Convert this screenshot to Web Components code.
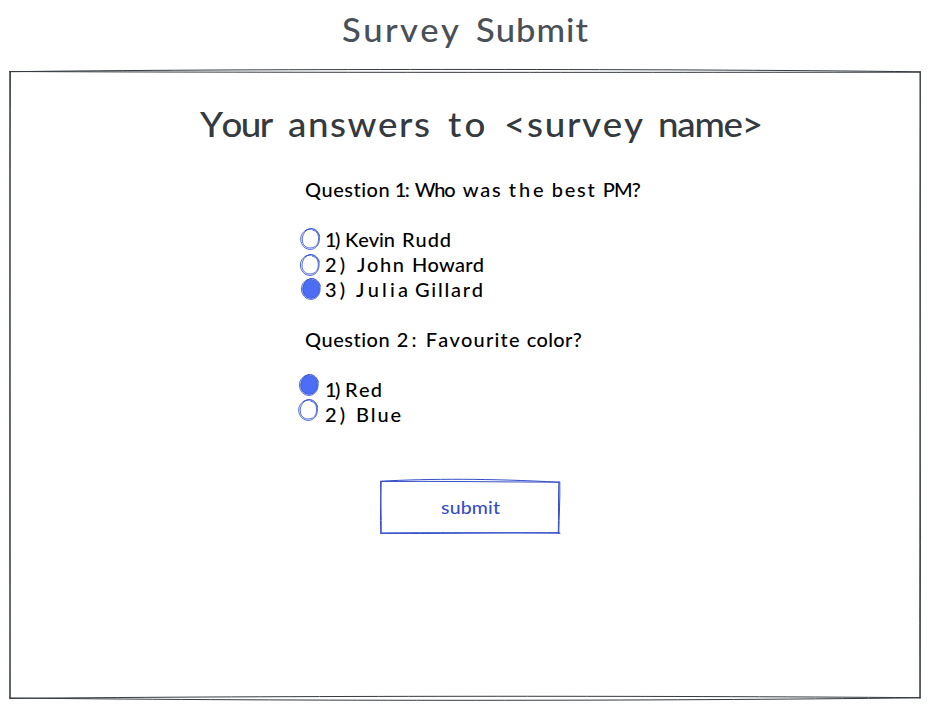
<!DOCTYPE html>
<html lang="en">
<head>
<meta charset="utf-8">
<title>Survey Submit</title>
<style>
html, body { margin: 0; background: #fff; }
body { width: 930px; height: 708px; overflow: hidden; font-family: "Lato", "Open Sans", sans-serif; }
</style>
</head>
<body>
<survey-page></survey-page>
<script>
const define = (name, html, ready) => customElements.define(name, class extends HTMLElement {
  connectedCallback() {
    if (this.shadowRoot) return;
    this.attachShadow({ mode: 'open' }).innerHTML = html;
    if (ready) ready(this);
  }
});

// A line of broad, loosely tracked lettering. "fit" lists the start and end of each word.
define('hand-text', `<style>
  :host { display: block; white-space: pre; }
  .line { display: inline-block; white-space: pre; transform-origin: 0 50%; font-kerning: none; }
</style><span class="line"></span>`, el => {
  const stretch = 1.08;
  const line = el.shadowRoot.querySelector('.line');
  const words = el.getAttribute('text').split(' ');
  const fit = el.getAttribute('fit').split(' ').map(p => p.split('-').map(v => v / stretch));
  const add = text => {
    const span = document.createElement('span');
    span.textContent = text;
    line.append(span);
    return span;
  };
  let x = 0;
  words.forEach((word, i) => {
    if (i) {
      const space = add(' ');
      space.style.letterSpacing = fit[i][0] - x - space.getBoundingClientRect().width + 'px';
      x = fit[i][0];
    }
    const span = add(word);
    const width = span.getBoundingClientRect().width;
    const gap = Math.min(3, Math.max(-1.5, (fit[i][1] - fit[i][0] - width) / (word.length - 1)));
    span.style.letterSpacing = gap + 'px';
    x += width + gap * word.length;
  });
  line.style.transform = `scaleX(${stretch})`;
  el.style.width = fit[fit.length - 1][1] * stretch + 'px';
});

// Sketched radio mark: two loose loops, filled when checked.
define('sketch-radio', `<style>
  :host { display: block; width: 25px; height: 25px; }
  svg { display: block; overflow: visible; }
  g { fill: none; stroke: #3f5bd6; stroke-width: .9; stroke-linecap: round; }
  .fill { fill: none; stroke: none; }
  :host([checked]) .fill { fill: #4c6ef5; }
</style>
<svg width="25" height="25" viewBox="0 0 25 25"><g>
  <ellipse class="fill" cx="0" cy="0" rx="8.8" ry="9.8"/>
  <path d="M-5-8.5C1-12 7-9.6 8.8-3.5C10.3 3 7 9.6 1 10.4C-5 11-9.6 6-9.6 0C-9.6-5-6-9.8 1-10.4"/>
  <path d="M2.5-8.8C7-8 8.6-4 8.2 1C7.8 7 4 9-1 9C-6 8.4-8.4 4.5-8-1C-7-6.5-3.5-10.6 2-10.4C5-10 8.2-7.5 9.4-3"/>
</g></svg>`, el => {
  el.shadowRoot.querySelector('g').setAttribute('transform',
    `translate(${el.getAttribute('cx')} ${el.getAttribute('cy')})`);
});

define('survey-option', `<style>
  :host { display: grid; grid-template-columns: 24px 1fr; height: 25px; }
</style><slot name="mark"></slot><slot></slot>`);

define('survey-question', `<style>
  :host { display: block; padding-bottom: 25px; }
  .title { padding: 0 0 25px 4px; }
</style><div class="title"><slot name="title"></slot></div><slot></slot>`);

define('sketch-button', `<style>
  :host { display: flex; position: relative; width: 180px; height: 54px;
    box-sizing: border-box; justify-content: center; padding-top: 15px; color: #364fc7; }
  svg { position: absolute; inset: 0; overflow: visible; }
  path { fill: none; stroke: #364fc7; stroke-width: 1; stroke-linecap: round; }
</style>
<svg width="180" height="54">
  <path d="M.8 1.2C50-1.5 110-1.5 179 2.2M.5 1.5C60 1 120 2 179 2.2"/>
  <path d="M179.8 2C180.2 20 179 36 178.8 53.5M178.8 2C178.2 20 178.8 36 178.3 53"/>
  <path d="M180 53.2C120 52.3 60 54 .8 53.4M179 52.6C110 53 50 52.3 1 53"/>
  <path d="M.8 53C-.2 36 1.2 20 .6 1.5M1.2 53C1.6 36 .3 20 1.2 1.5"/>
</svg><slot></slot>`);

define('sketch-frame', `<style>
  :host { display: block; position: relative; width: 912px; height: 630px; margin-left: 9px; box-sizing: border-box; padding-top: 32px; }
  svg { position: absolute; inset: 0; overflow: visible; }
  path { fill: none; stroke: #343a40; stroke-width: 1; stroke-linecap: round; }
</style>
<svg width="912" height="630">
  <path d="M.7 .7C210-2 640-2.6 911 .8M.7 .5C230 1.6 610 1.4 911 1.2"/>
  <path d="M911.3 .8C910.2 210 912 420 911.2 627M911.1 .8C911.8 210 910.5 430 910.9 627"/>
  <path d="M911 626.7C640 624.6 280 624.8 .8 627.4M911 626.8C640 630 300 630.2 .8 627"/>
  <path d="M1.2 627C.2 420 1.4 210 .8 .6M.8 627C1.7 430 .4 210 1.4 .6"/>
</svg><slot></slot>`);

define('survey-page', `<style>
  :host { display: flex; flex-direction: column; width: 930px; height: 708px; }
  .page { display: flex; justify-content: center; height: 71px; padding-top: 10px; box-sizing: border-box;
    font-size: 32px; line-height: 40px; color: #495057; font-weight: 500; }
  .heading { display: flex; padding-left: 191px; font-size: 34px; line-height: 42px; color: #343a40; font-weight: 500; }
  .answers { padding: 33px 0 0 292px; font-size: 18.5px; line-height: 25px; color: #000; font-weight: 500; }
  .action { display: flex; padding: 27px 0 0 371px; font-size: 18px; line-height: 25px; font-weight: 500; }
</style>
<div class="page"><hand-text text="Survey Submit" fit="0-117 134-246"></hand-text></div>
<sketch-frame>
  <div class="heading"><hand-text text="Your answers to &lt;survey name&gt;" fit="0-72 88-230 248-286 304-443 458-563"></hand-text></div>
  <div class="answers">
    <survey-question>
      <hand-text slot="title" text="Question 1: Who was the best PM?" fit="0-85 90-102 110-151 158-196 204-239 247-290 298-336"></hand-text>
      <survey-option><sketch-radio slot="mark" cx="9.3" cy="11"></sketch-radio><hand-text text="1) Kevin Rudd" fit="0-13 20-70 77-126"></hand-text></survey-option>
      <survey-option><sketch-radio slot="mark" cx="9" cy="12"></sketch-radio><hand-text text="2) John Howard" fit="0-23 32-79 87-159"></hand-text></survey-option>
      <survey-option><sketch-radio slot="mark" cx="10" cy="11" checked></sketch-radio><hand-text text="3) Julia Gillard" fit="0-23 31-83 90-158"></hand-text></survey-option>
    </survey-question>
    <survey-question>
      <hand-text slot="title" text="Question 2: Favourite color?" fit="0-85 92-112 121-215 222-277"></hand-text>
      <survey-option><sketch-radio slot="mark" cx="8" cy="7" checked></sketch-radio><hand-text text="1) Red" fit="0-13 20-57"></hand-text></survey-option>
      <survey-option><sketch-radio slot="mark" cx="7.3" cy="7"></sketch-radio><hand-text text="2) Blue" fit="0-23 31-76"></hand-text></survey-option>
    </survey-question>
  </div>
  <div class="action"><sketch-button><hand-text text="submit" fit="0-59"></hand-text></sketch-button></div>
</sketch-frame>`);
</script>
</body>
</html>
